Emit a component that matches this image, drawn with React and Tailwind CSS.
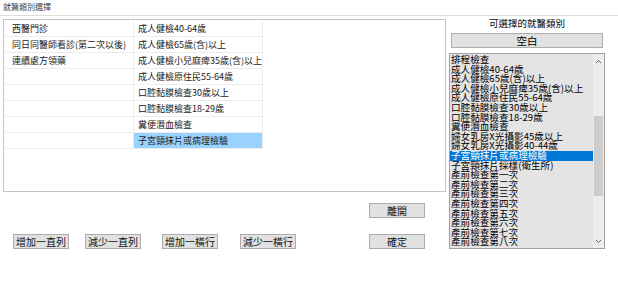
import React from 'react';

const font = { fontFamily: '"Noto Sans CJK TC", "Liberation Sans", sans-serif' };

const leftCol = ["西醫門診", "同日同醫師看診(第二次以後)", "連續處方領藥", "", "", "", "", ""];
const rightCol = [
  "成人健檢40-64歲",
  "成人健檢65歲(含)以上",
  "成人健檢小兒麻痺35歲(含)以上",
  "成人健檢原住民55-64歲",
  "口腔黏膜檢查30歲以上",
  "口腔黏膜檢查18-29歲",
  "糞便潛血檢查",
  "子宮頸抹片或病理檢驗",
];

const options = [
  "排程檢查",
  "成人健檢40-64歲",
  "成人健檢65歲(含)以上",
  "成人健檢小兒麻痺35歲(含)以上",
  "成人健檢原住民55-64歲",
  "口腔黏膜檢查30歲以上",
  "口腔黏膜檢查18-29歲",
  "糞便潛血檢查",
  "婦女乳房X光攝影45歲以上",
  "婦女乳房X光攝影40-44歲",
  "子宮頸抹片或病理檢驗",
  "子宮頸抹片採樣(衛生所)",
  "產前檢查第一次",
  "產前檢查第二次",
  "產前檢查第三次",
  "產前檢查第四次",
  "產前檢查第五次",
  "產前檢查第六次",
  "產前檢查第七次",
  "產前檢查第八次",
];

const btnClass = "h-[15px] w-[56px] bg-[#e1e1e1] border border-[#adadad] text-[10px] leading-[13px] text-[#111] flex items-center justify-center";

function WinButton({ label, className = "" }) {
  return <div className={`${btnClass} ${className}`}>{label}</div>;
}

function Grid() {
  return (
    <div className="ml-[1px] mt-[1px] grid grid-cols-[129px_129px]">
      {leftCol.map((text, i) => (
        <React.Fragment key={i}>
          <div className="h-[16px] border-r border-b border-[#ececec] pl-[7px] text-[9px] leading-[15px] text-[#222] whitespace-nowrap">
            {text}
          </div>
          <div className={`h-[16px] border-r border-b border-[#ececec] pl-[4px] text-[9px] leading-[15px] text-[#222] whitespace-nowrap ${i === 7 ? "bg-[#99d1ff]" : ""}`}>
            {rightCol[i]}
          </div>
        </React.Fragment>
      ))}
    </div>
  );
}

// listbox rows are packed tighter than the glyphs, like the original control
function OptionList() {
  return (
    <div className="mt-[5px] flex h-[196px] w-[156px] border border-[#a0a0a0] bg-[#e4e4e4]">
      <div className="flex-1 pt-[1px]">
        {options.map((opt, i) => (
          <div
            key={opt}
            className={`h-[9.6px] pl-[1px] text-[9.6px] leading-[9.6px] whitespace-nowrap ${i === 10 ? "bg-[#0078d7] text-white" : "text-black"}`}
          >
            {opt}
          </div>
        ))}
      </div>
      <div className="flex w-[11px] flex-col items-center bg-[#ececec]">
        <div className="flex h-[14px] items-center justify-center">
          <svg width="7" height="5" viewBox="0 0 7 5"><path d="M1 4 L3.5 1.5 L6 4" fill="none" stroke="#606060" strokeWidth="1" /></svg>
        </div>
        <div className="mt-[48px] h-[80px] w-[9px] bg-[#cdcdcd]" />
        <div className="flex-1" />
        <div className="flex h-[14px] items-center justify-center">
          <svg width="7" height="5" viewBox="0 0 7 5"><path d="M1 1 L3.5 3.5 L6 1" fill="none" stroke="#606060" strokeWidth="1" /></svg>
        </div>
      </div>
    </div>
  );
}

export default function App() {
  return (
    <div className="h-[283px] w-[618px] bg-white" style={font}>
      <div className="h-[16px] border-b border-[#dcdcdc] pl-[3px] text-[8px] leading-[14px] text-[#444]">就醫類別選擇</div>
      <div className="flex">
        <div className="w-[449px]">
          <div className="ml-[3px] mt-[3px] h-[173px] w-[443px] border border-[#c4c4c4] bg-white">
            <Grid />
          </div>
          <div className="mt-[11px] flex">
            <WinButton label="離開" className="ml-[369px]" />
          </div>
          <div className="mt-[16px] flex">
            <WinButton label="增加一直列" className="ml-[13px]" />
            <WinButton label="減少一直列" className="ml-[16px]" />
            <WinButton label="增加一橫行" className="ml-[21px]" />
            <WinButton label="減少一橫行" className="ml-[22px]" />
            <div className={`${btnClass} ml-[73px] border-[#0078d7]`}>確定</div>
          </div>
        </div>
        <div className="w-[156px]">
          <div className="h-[14px] text-center text-[9.5px] leading-[14px] text-black">可選擇的就醫類別</div>
          <div className="ml-[2px] mt-[3px] flex h-[15px] w-[152px] items-center justify-center border border-[#adadad] bg-[#e1e1e1] text-[10.5px] text-black">
            空白
          </div>
          <OptionList />
        </div>
      </div>
    </div>
  );
}
